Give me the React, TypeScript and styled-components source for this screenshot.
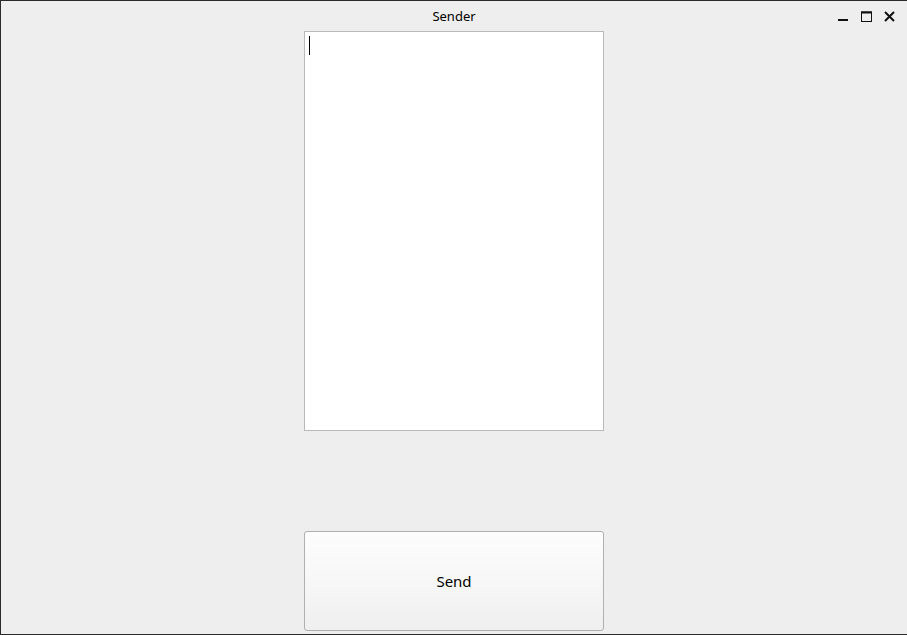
import React from "react";
import styled, { createGlobalStyle } from "styled-components";

const Global = createGlobalStyle`
  html, body { margin: 0; padding: 0; background: #eeeeee; }
  body { font-family: "Noto Sans", "DejaVu Sans", sans-serif; }
  * { box-sizing: border-box; }
`;

const Window = styled.div`
  width: 907px;
  height: 635px;
  background: #eeeeee;
  border-top: 1px solid #2a2a2a;
  border-left: 1px solid #2a2a2a;
  border-bottom: 1px solid #2a2a2a;
  display: flex;
  flex-direction: column;
`;

const TitleBar = styled.div`
  height: 30px;
  display: grid;
  grid-template-columns: 1fr auto 1fr;
  align-items: start;
`;

const Title = styled.div`
  grid-column: 2;
  font-size: 13px;
  line-height: 16px;
  padding-top: 7px;
  color: #000;
`;

const Controls = styled.div`
  grid-column: 3;
  justify-self: end;
  display: flex;
  gap: 12px;
  padding-top: 10px;
  padding-right: 12px;
`;

const Content = styled.div`
  flex: 1;
  display: flex;
  flex-direction: column;
  align-items: center;
`;

const TextBox = styled.div`
  width: 300px;
  height: 400px;
  background: #ffffff;
  border: 1px solid #b9b9b9;
  padding: 4px 0 0 4px;
`;

const Caret = styled.div`
  width: 1px;
  height: 19px;
  background: #000;
`;

const SendButton = styled.button`
  margin-top: 100px;
  width: 300px;
  height: 100px;
  border: 1px solid #b0b0b0;
  border-radius: 3px;
  background: linear-gradient(to bottom, #fdfdfd 0%, #f7f7f7 50%, #efefef 100%);
  font-family: "Noto Sans", "DejaVu Sans", sans-serif;
  font-size: 15px;
  color: #000;
  padding: 0;
`;

const Icon = styled.svg`
  display: block;
`;

export default function App() {
  return (
    <>
      <Global />
      <Window>
        <TitleBar>
          <Title>Sender</Title>
          <Controls>
            <Icon width="11" height="11" viewBox="0 0 11 11">
              <rect x="0" y="8" width="10" height="2" fill="#111" />
            </Icon>
            <Icon width="11" height="11" viewBox="0 0 11 11">
              <rect x="0.5" y="1" width="10" height="9.5" fill="none" stroke="#111" strokeWidth="1" />
              <rect x="0" y="0.5" width="11" height="2" fill="#111" />
            </Icon>
            <Icon width="11" height="11" viewBox="0 0 11 11">
              <path d="M1 1 L10 10 M10 1 L1 10" stroke="#111" strokeWidth="2" />
            </Icon>
          </Controls>
        </TitleBar>
        <Content>
          <TextBox>
            <Caret />
          </TextBox>
          <SendButton>Send</SendButton>
        </Content>
      </Window>
    </>
  );
}
